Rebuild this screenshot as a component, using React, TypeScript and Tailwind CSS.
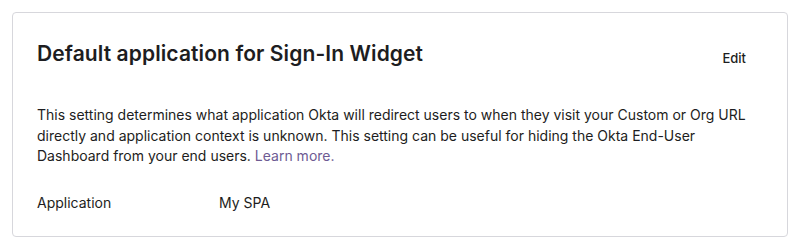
export default function App() {
  return (
    <div className="p-3 bg-white" style={{ fontFamily: "Inter, 'Noto Sans', sans-serif" }}>
      <div className="w-[776px] h-[225px] border border-[#d7d7dc] rounded-[4px] px-6 pt-[27px] text-[#1d1d21]">
        <div className="flex items-start justify-between">
          <h2 className="text-[21px] leading-[28px] font-semibold tracking-[0.1px]">
            Default application for Sign-In Widget
          </h2>
          <button className="mt-[8px] mr-[17px] text-[13px] leading-[20px] font-medium text-[#1d1d21]">
            Edit
          </button>
        </div>
        <p className="mt-[37px] text-[14px] leading-[20.5px] whitespace-nowrap">
          This setting determines what application Okta will redirect users to when they visit your Custom or Org URL
          <br />
          directly and application context is unknown. This setting can be useful for hiding the Okta End-User
          <br />
          Dashboard from your end users.{" "}
          <a className="text-[#6e5b93]">Learn more.</a>
        </p>
        <div className="mt-[26px] flex text-[14px] leading-[20.5px]">
          <div className="w-[182px]">Application</div>
          <div>My SPA</div>
        </div>
      </div>
    </div>
  );
}
